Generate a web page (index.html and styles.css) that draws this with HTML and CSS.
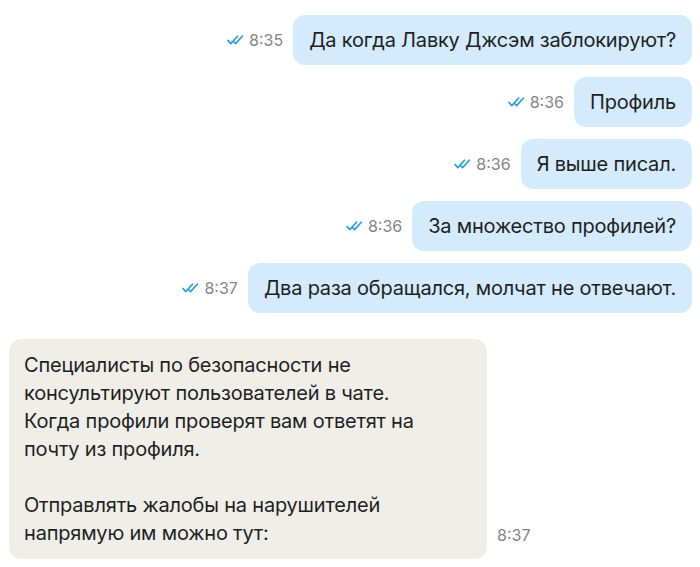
FILE: index.html
```html
<!DOCTYPE html>
<html lang="ru">
<head>
<meta charset="utf-8">
<link rel="stylesheet" href="styles.css">
</head>
<body>
<div class="chat">
  <div class="row out">
    <span class="meta"><svg class="check" viewBox="0 0 18 10" width="18" height="10"><path d="M1 5.5 L3.8 8.6 L10.5 1.2 M7.2 7.2 L8.6 8.6 L15.3 1.2" fill="none" stroke="#2aa0dc" stroke-width="1.7" stroke-linecap="round" stroke-linejoin="round"/></svg><span class="time">8:35</span></span>
    <div class="bubble">Да когда Лавку Джсэм заблокируют?</div>
  </div>
  <div class="row out">
    <span class="meta"><svg class="check" viewBox="0 0 18 10" width="18" height="10"><path d="M1 5.5 L3.8 8.6 L10.5 1.2 M7.2 7.2 L8.6 8.6 L15.3 1.2" fill="none" stroke="#2aa0dc" stroke-width="1.7" stroke-linecap="round" stroke-linejoin="round"/></svg><span class="time">8:36</span></span>
    <div class="bubble">Профиль</div>
  </div>
  <div class="row out">
    <span class="meta"><svg class="check" viewBox="0 0 18 10" width="18" height="10"><path d="M1 5.5 L3.8 8.6 L10.5 1.2 M7.2 7.2 L8.6 8.6 L15.3 1.2" fill="none" stroke="#2aa0dc" stroke-width="1.7" stroke-linecap="round" stroke-linejoin="round"/></svg><span class="time">8:36</span></span>
    <div class="bubble">Я выше писал.</div>
  </div>
  <div class="row out">
    <span class="meta"><svg class="check" viewBox="0 0 18 10" width="18" height="10"><path d="M1 5.5 L3.8 8.6 L10.5 1.2 M7.2 7.2 L8.6 8.6 L15.3 1.2" fill="none" stroke="#2aa0dc" stroke-width="1.7" stroke-linecap="round" stroke-linejoin="round"/></svg><span class="time">8:36</span></span>
    <div class="bubble">За множество профилей?</div>
  </div>
  <div class="row out">
    <span class="meta"><svg class="check" viewBox="0 0 18 10" width="18" height="10"><path d="M1 5.5 L3.8 8.6 L10.5 1.2 M7.2 7.2 L8.6 8.6 L15.3 1.2" fill="none" stroke="#2aa0dc" stroke-width="1.7" stroke-linecap="round" stroke-linejoin="round"/></svg><span class="time">8:37</span></span>
    <div class="bubble">Два раза обращался, молчат не отвечают.</div>
  </div>
  <div class="row in">
    <div class="bubble incoming">Специалисты по безопасности не<br>консультируют пользователей в чате.<br>Когда профили проверят вам ответят на<br>почту из профиля.<br><br>Отправлять жалобы на нарушителей<br>напрямую им можно тут:</div>
    <span class="meta"><span class="time">8:37</span></span>
  </div>
</div>
</body>
</html>
```

FILE: styles.css
```css
html, body {
  margin: 0;
  padding: 0;
  background: #ffffff;
}
body {
  font-family: Inter, "Noto Sans", sans-serif;
  color: #1f1f1f;
}
.chat {
  display: flex;
  flex-direction: column;
  padding: 15px 8px 0 9px;
  gap: 12px;
}
.row {
  display: flex;
  align-items: center;
  gap: 10px;
}
.row.out {
  justify-content: flex-end;
}
.row.in {
  justify-content: flex-start;
  align-items: flex-end;
  margin-top: 14px;
}
.bubble {
  background: #d3ebfc;
  border-radius: 12px;
  padding: 12px 16px;
  font-size: 20px;
  line-height: 26px;
  letter-spacing: -0.2px;
  white-space: nowrap;
}
.bubble.incoming {
  background: #f0eee9;
  width: 448px;
  padding: 12px 15px;
  line-height: 28px;
}
.meta {
  display: flex;
  align-items: center;
  gap: 4px;
  color: #858585;
  font-size: 16px;
}
.row.in .meta {
  padding-bottom: 14px;
}
.check {
  display: block;
}
```
